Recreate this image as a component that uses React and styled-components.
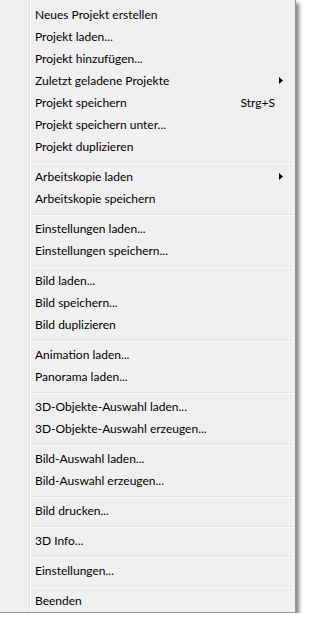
import React from "react";
import styled, { createGlobalStyle } from "styled-components";

const GlobalStyle = createGlobalStyle`
  html, body {
    margin: 0;
    padding: 0;
    background: #ffffff;
  }
`;

const groups = [
  [
    { label: "Neues Projekt erstellen" },
    { label: "Projekt laden..." },
    { label: "Projekt hinzufügen..." },
    { label: "Zuletzt geladene Projekte", submenu: true },
    { label: "Projekt speichern", shortcut: "Strg+S" },
    { label: "Projekt speichern unter..." },
    { label: "Projekt duplizieren" },
  ],
  [
    { label: "Arbeitskopie laden", submenu: true },
    { label: "Arbeitskopie speichern" },
  ],
  [
    { label: "Einstellungen laden..." },
    { label: "Einstellungen speichern..." },
  ],
  [
    { label: "Bild laden..." },
    { label: "Bild speichern..." },
    { label: "Bild duplizieren" },
  ],
  [{ label: "Animation laden..." }, { label: "Panorama laden..." }],
  [
    { label: "3D-Objekte-Auswahl laden..." },
    { label: "3D-Objekte-Auswahl erzeugen..." },
  ],
  [
    { label: "Bild-Auswahl laden..." },
    { label: "Bild-Auswahl erzeugen..." },
  ],
  [{ label: "Bild drucken..." }],
  [{ label: "3D Info..." }],
  [{ label: "Einstellungen..." }],
  [{ label: "Beenden" }],
];

function App() {
  return (
    <>
      <GlobalStyle />
      <Menu>
        {groups.map((group, gi) => (
          <React.Fragment key={gi}>
            {gi > 0 && <Separator />}
            {group.map((item) => (
              <Item key={item.label}>
                <Label>{item.label}</Label>
                {item.shortcut && <Shortcut>{item.shortcut}</Shortcut>}
                <ArrowCell>
                  {item.submenu && (
                    <svg width="4" height="7" viewBox="0 0 4 7">
                      <path d="M0 0 L4 3.5 L0 7 Z" fill="#000" />
                    </svg>
                  )}
                </ArrowCell>
              </Item>
            ))}
          </React.Fragment>
        ))}
      </Menu>
    </>
  );
}

export default App;

const Menu = styled.div`
  width: 295px;
  padding: 3px 0 1px 0;
  display: flex;
  flex-direction: column;
  background: linear-gradient(
    to right,
    #f0f0f0 0,
    #f0f0f0 29px,
    #e2e3e3 29px,
    #e2e3e3 30px,
    #ffffff 30px,
    #ffffff 31px,
    #f0f0f0 31px
  );
  border-right: 1px solid #979797;
  border-bottom: 1px solid #979797;
  box-shadow: 3px 3px 4px rgba(0, 0, 0, 0.5);
  font-family: Lato, "Noto Sans", sans-serif;
  font-size: 12px;
  color: #000000;
`;

const Item = styled.div`
  height: 22px;
  display: flex;
  align-items: center;
  padding-left: 35px;
  padding-right: 12px;
`;

const Label = styled.span`
  flex: 1;
  white-space: nowrap;
`;

const Shortcut = styled.span`
  white-space: nowrap;
  margin-right: 4px;
`;

const ArrowCell = styled.span`
  width: 4px;
  display: flex;
  align-items: center;
  justify-content: flex-end;
`;

const Separator = styled.div`
  height: 8px;
  margin-left: 31px;
  margin-right: 2px;
  background: linear-gradient(
    to bottom,
    transparent 0,
    transparent 5px,
    #e2e3e3 5px,
    #e2e3e3 6px,
    #ffffff 6px,
    #ffffff 7px,
    transparent 7px
  );
`;
